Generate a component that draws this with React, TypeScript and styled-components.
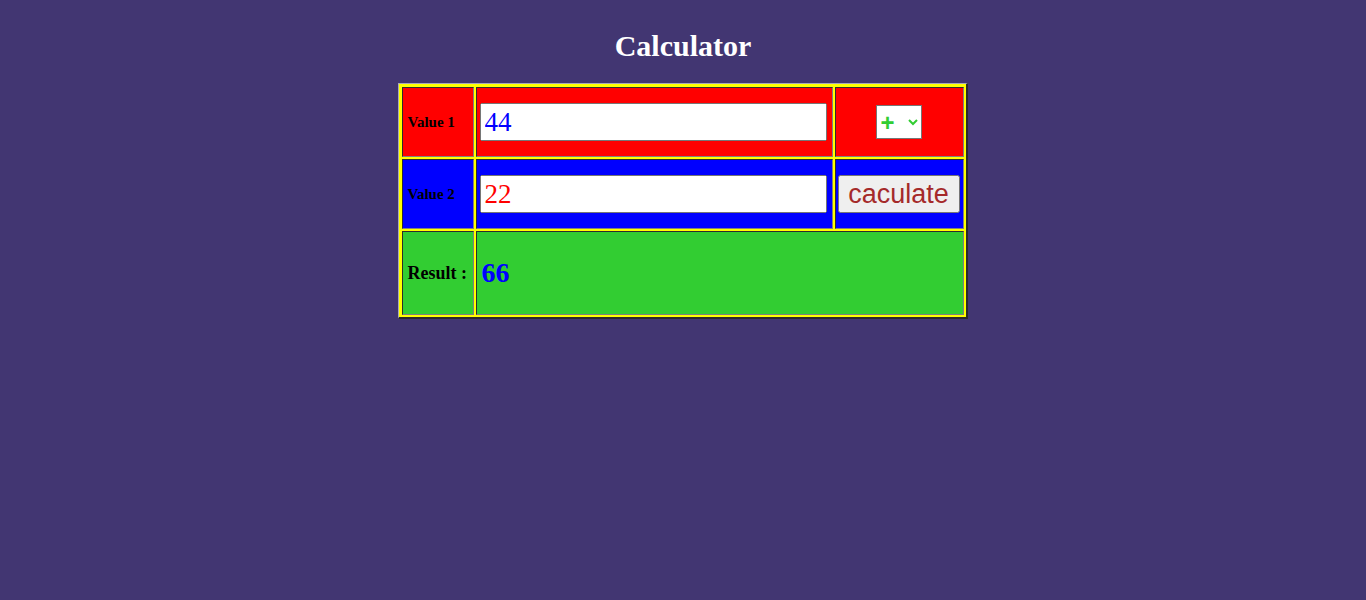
import styled, { createGlobalStyle } from "styled-components";

const COLORS = {
  page: "#423672",
  red: "#ff0000",
  blue: "#0000ff",
  green: "#32cd32",
  yellow: "#ffff00",
  brown: "#a52a2a",
};

const GlobalStyle = createGlobalStyle`
  html, body {
    margin: 0;
    padding: 0;
    background-color: ${COLORS.page};
    font-family: "Liberation Serif", "Times New Roman", serif;
  }
`;

export default function App() {
  return (
    <Page>
      <GlobalStyle />
      <Title>Calculator</Title>
      <CalcTable>
        <tbody>
          <Row height={70}>
            <LabelCell bg={COLORS.red} size={15}>
              Value 1
            </LabelCell>
            <Cell bg={COLORS.red}>
              <NumberInput type="text" defaultValue="44" textColor={COLORS.blue} />
            </Cell>
            <ActionCell bg={COLORS.red}>
              <OperatorSelect defaultValue="+">
                <option value="+">+</option>
                <option value="-">-</option>
                <option value="*">*</option>
                <option value="/">/</option>
              </OperatorSelect>
            </ActionCell>
          </Row>
          <Row height={70}>
            <LabelCell bg={COLORS.blue} size={15}>
              Value 2
            </LabelCell>
            <Cell bg={COLORS.blue}>
              <NumberInput type="text" defaultValue="22" textColor={COLORS.red} />
            </Cell>
            <ActionCell bg={COLORS.blue}>
              <CalcButton type="button">caculate</CalcButton>
            </ActionCell>
          </Row>
          <Row height={84}>
            <LabelCell bg={COLORS.green} size={18}>
              Result :
            </LabelCell>
            <Cell bg={COLORS.green} colSpan={2}>
              <ResultValue>66</ResultValue>
            </Cell>
          </Row>
        </tbody>
      </CalcTable>
    </Page>
  );
}

const Page = styled.div`
  padding-top: 29px;
  display: flex;
  flex-direction: column;
  align-items: center;
`;

const Title = styled.h1`
  margin: 0 0 21px;
  font-size: 30px;
  line-height: 33px;
  font-weight: bold;
  color: #fff;
`;

const CalcTable = styled.table`
  box-sizing: border-box;
  width: 570px;
  margin-left: -1px;
  padding: 1px 0 0 1px;
  background-color: ${COLORS.yellow};
  border-style: solid;
  border-width: 1px 2px 2px 1px;
  border-color: #a9a9b9 #2a2a2a #2a2a2a #a9a9b9;
  border-spacing: 2px;
  border-collapse: separate;
`;

const Row = styled.tr<{ height: number }>`
  height: ${(p) => p.height}px;
`;

const Cell = styled.td<{ bg: string }>`
  background-color: ${(p) => p.bg};
  border: 1px inset #808080;
  padding: 3px;
  text-align: left;
  vertical-align: middle;
`;

const LabelCell = styled(Cell)<{ size: number }>`
  width: 61px;
  padding: 0 4px 0 5px;
  font-size: ${(p) => p.size}px;
  font-weight: bold;
  color: #000;
  white-space: nowrap;
`;

const ActionCell = styled(Cell)`
  width: 122px;
  padding: 3px 3px 3px 2px;
  text-align: center;
`;

const NumberInput = styled.input<{ textColor: string }>`
  box-sizing: border-box;
  width: 347px;
  height: 38px;
  margin: 0;
  padding: 1px 3px;
  font-family: "Liberation Serif", "Times New Roman", serif;
  font-size: 27px;
  color: ${(p) => p.textColor};
  vertical-align: middle;
`;

const OperatorSelect = styled.select`
  box-sizing: border-box;
  width: 46px;
  height: 34px;
  margin: 0;
  font-family: "Liberation Sans", Arial, sans-serif;
  font-size: 24px;
  font-weight: bold;
  color: ${COLORS.green};
  background-color: #fff;
  vertical-align: middle;
`;

const CalcButton = styled.button`
  box-sizing: border-box;
  width: 122px;
  height: 38px;
  margin: 0;
  padding: 0;
  font-family: "Liberation Sans", Arial, sans-serif;
  font-size: 27px;
  color: ${COLORS.brown};
  vertical-align: middle;
`;

const ResultValue = styled.span`
  display: inline-block;
  padding-left: 2px;
  font-size: 28px;
  font-weight: bold;
  color: ${COLORS.blue};
`;
